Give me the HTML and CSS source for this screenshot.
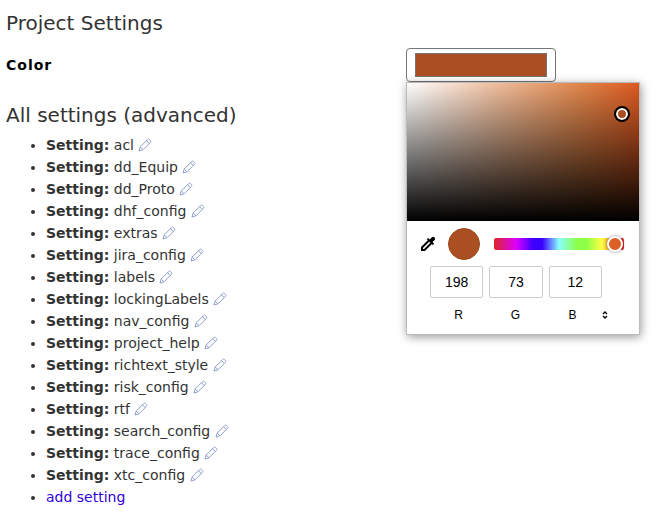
FILE: index.html
```
<!DOCTYPE html>
<html lang="en">
<head>
    <meta charset="UTF-8">
    <title>Project Settings</title>
    <link rel="stylesheet" href="styles.css">
</head>
<body>
<!-- pencil shared by all setting rows -->
<svg class="sprite" aria-hidden="true">
    <symbol id="pencil" viewBox="0 0 14 14">
        <path d="M1 13l1.200-4L9.500 1.700q1-1.200 2.200 0l.6.6q1.200 1.200 0 2.200L5 11.800zM2.200 9L5 11.800M8.500 2.700l2.800 2.800"/>
    </symbol>
</svg>
<h1>Project Settings</h1>
<div class="color-row">
    <label class="color-label" for="color">Color</label>
    <div class="color-control">
        <input type="color" id="color" value="#ab4f23">
        <div class="picker">
            <div class="shade"><span class="shade-handle"></span></div>
            <div class="picker-tools">
                <button class="dropper" type="button" aria-label="Pick a color">
                    <svg viewBox="0 0 16 16" width="16" height="16">
                        <path d="M9 4.500L2 11.500V14h2.500l7-7" fill="none" stroke="#000" stroke-width="2"/>
                        <path d="M6.800 3.300l1.400-1.400 1.600 1.600 2-2.200q1.400-1.200 2.700.1t.2 2.700l-2.200 2 1.600 1.600-1.400 1.400z"/>
                    </svg>
                </button>
                <span class="preview"></span>
                <input type="range" class="hue" min="0" max="360" value="357" aria-label="Hue">
            </div>
            <div class="channels">
                <input type="text" id="red" value="198">
                <input type="text" id="green" value="73">
                <input type="text" id="blue" value="12">
            </div>
            <div class="channel-names">
                <label for="red">R</label>
                <label for="green">G</label>
                <label for="blue">B</label>
                <button class="format" type="button" aria-label="Change format">
                    <svg viewBox="0 0 6 8" width="6" height="8">
                        <path d="M1 3l2-2 2 2M1 5l2 2 2-2" fill="none" stroke="#000" stroke-width="1.300"/>
                    </svg>
                </button>
            </div>
        </div>
    </div>
</div>
<h2>All settings (advanced)</h2>
<ul class="settings">
    <li><b>Setting:</b> acl <svg class="pencil"><use href="#pencil"/></svg></li>
    <li><b>Setting:</b> dd_Equip <svg class="pencil"><use href="#pencil"/></svg></li>
    <li><b>Setting:</b> dd_Proto <svg class="pencil"><use href="#pencil"/></svg></li>
    <li><b>Setting:</b> dhf_config <svg class="pencil"><use href="#pencil"/></svg></li>
    <li><b>Setting:</b> extras <svg class="pencil"><use href="#pencil"/></svg></li>
    <li><b>Setting:</b> jira_config <svg class="pencil"><use href="#pencil"/></svg></li>
    <li><b>Setting:</b> labels <svg class="pencil"><use href="#pencil"/></svg></li>
    <li><b>Setting:</b> lockingLabels <svg class="pencil"><use href="#pencil"/></svg></li>
    <li><b>Setting:</b> nav_config <svg class="pencil"><use href="#pencil"/></svg></li>
    <li><b>Setting:</b> project_help <svg class="pencil"><use href="#pencil"/></svg></li>
    <li><b>Setting:</b> richtext_style <svg class="pencil"><use href="#pencil"/></svg></li>
    <li><b>Setting:</b> risk_config <svg class="pencil"><use href="#pencil"/></svg></li>
    <li><b>Setting:</b> rtf <svg class="pencil"><use href="#pencil"/></svg></li>
    <li><b>Setting:</b> search_config <svg class="pencil"><use href="#pencil"/></svg></li>
    <li><b>Setting:</b> trace_config <svg class="pencil"><use href="#pencil"/></svg></li>
    <li><b>Setting:</b> xtc_config <svg class="pencil"><use href="#pencil"/></svg></li>
    <li><a href="#add">add setting</a></li>
</ul>
</body>
</html>
```
FILE: styles.css
```
* {
    box-sizing: border-box;
}

body {
    margin: 0;
    padding: 8px 6px 0;
    background: #fff;
    color: #333;
    font-family: Verdana, "DejaVu Sans", sans-serif;
    font-size: 14px;
    line-height: 22px;
}

h1,
h2 {
    margin: 0;
    font-size: 20px;
    font-weight: normal;
    line-height: 30px;
}

h2 {
    margin-top: 18px;
    margin-bottom: 4px;
}

button {
    padding: 0;
    border: 0;
    background: none;
}

svg {
    display: block;
}

.sprite {
    position: absolute;
    width: 0;
    height: 0;
}

.color-row {
    display: grid;
    grid-template-columns: 400px 1fr;
    align-items: center;
    margin-top: 10px;
}

.color-label {
    color: #000;
    font-weight: bold;
    letter-spacing: 1px;
}

.color-control {
    position: relative;
}

#color {
    display: block;
    width: 150px;
    height: 34px;
    padding: 4px 8px;
    border: 1px solid #767676;
    border-radius: 4px;
    background: #fff;
}

#color::-webkit-color-swatch-wrapper {
    padding: 0;
}

#color::-webkit-color-swatch {
    border: 1px solid #767676;
    border-radius: 0;
}

/* popup */
.picker {
    position: absolute;
    top: 100%;
    left: 0;
    width: 234px;
    padding-bottom: 8px;
    border: 1px solid #bbb;
    background: #fff;
    box-shadow: 1px 2px 9px rgba(0, 0, 0, 0.4);
    color: #000;
    font-family: "Liberation Sans", Arial, sans-serif;
}

.shade {
    position: relative;
    height: 138px;
    background: linear-gradient(to top, #000, transparent), linear-gradient(to right, #fff, #eebb99 40%, #e0854a 75%, #dd5a22);
}

.shade-handle {
    position: absolute;
    top: 23px;
    right: 9px;
    width: 16px;
    height: 16px;
    border: 2px solid #000;
    border-radius: 50%;
    background: #ab4f23;
    box-shadow: inset 0 0 0 2px #fff;
}

.picker-tools {
    display: flex;
    align-items: center;
    padding: 7px 15px 6px 13px;
}

.preview {
    width: 32px;
    height: 32px;
    margin: 0 14px 0 12px;
    border: 1px solid #9a4a20;
    border-radius: 50%;
    background: #ab4f23;
}

.hue {
    flex: 1;
    min-width: 0;
    height: 12px;
    margin: 0;
    border-radius: 2px;
    background: linear-gradient(to right, #dc2626, #dc00ff 17%, #3c00ff 30%, #3c00ff 37%, #8ff 50%, #8cff46 64%, #8cff46 71%, #ff4 83%, #dc2626 97%);
    appearance: none;
}

.hue::-webkit-slider-thumb {
    width: 16px;
    height: 16px;
    border: 2px solid #fff;
    border-radius: 50%;
    background: #dc6026;
    box-shadow: 0 0 3px rgba(0, 0, 0, 0.5);
    appearance: none;
}

.channels {
    display: flex;
    gap: 6px;
    padding: 0 37px 0 23px;
}

.channels input {
    flex: 1;
    min-width: 0;
    height: 32px;
    padding: 0;
    border: 1px solid #ccc;
    border-radius: 2px;
    font-family: inherit;
    font-size: 14px;
    text-align: center;
}

.channel-names {
    display: flex;
    align-items: center;
    margin-top: 6px;
    padding-left: 23px;
    font-size: 12px;
}

.channel-names label {
    width: 57px;
    text-align: center;
}

.format {
    margin-left: 1px;
}

/* list of settings */
.settings {
    margin: 0;
    padding-left: 40px;
}

.pencil {
    display: inline-block;
    width: 14px;
    height: 14px;
    vertical-align: -2px;
    fill: none;
    stroke: #8fa0cc;
}

a {
    color: #30d;
    text-decoration: none;
}
```
